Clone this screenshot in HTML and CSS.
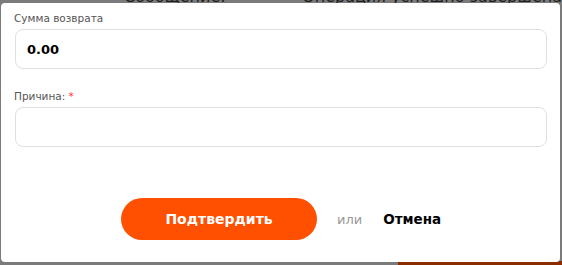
FILE: index.html
```html
<!DOCTYPE html>
<html lang="ru">
<head>
  <meta charset="UTF-8">
  <meta name="viewport" content="width=device-width, initial-scale=1.0">
  <title>Возврат</title>
  <link rel="stylesheet" href="styles.css">
</head>
<body>
  <div class="page">
    <div class="info-row">
      <span class="info-label">Сообщение:</span>
      <span class="info-value">Операция успешно завершена</span>
    </div>
    <div class="page-bottom">
      <div class="page-btn"></div>
    </div>
  </div>

  <div class="modal">
    <div class="field">
      <label for="amount">Сумма возврата</label>
      <input type="text" id="amount" class="amount" value="0.00">
    </div>
    <div class="field">
      <label for="reason">Причина: <span class="req">*</span></label>
      <input type="text" id="reason">
    </div>
    <div class="actions">
      <button class="btn">Подтвердить</button>
      <span class="or">или</span>
      <a href="#" class="cancel">Отмена</a>
    </div>
  </div>
</body>
</html>
```

FILE: styles.css
```css
body {
  margin: 0;
  width: 562px;
  height: 265px;
  overflow: hidden;
  background-color: #7b7b7b;
  font-family: "DejaVu Sans", Verdana, sans-serif;
  position: relative;
}
.page {
  height: 265px;
  display: flex;
  flex-direction: column;
  justify-content: space-between;
}
.info-row {
  display: flex;
  margin-top: -13px;
  font-size: 16px;
  line-height: 19px;
  color: #1e1e1e;
}
.info-label {
  margin-left: 124px;
  width: 263px;
}
.info-value {
  white-space: nowrap;
}
.page-bottom {
  display: flex;
  justify-content: flex-end;
  height: 4px;
}
.page-btn {
  width: 164px;
  background-color: #8a2c00;
}
.modal {
  position: absolute;
  left: 1px;
  top: 3px;
  width: 559px;
  height: 259px;
  box-sizing: border-box;
  background-color: white;
  border-radius: 4px;
  padding: 9px 14px 0 13px;
}
.field {
  margin-bottom: 21px;
}
.field label {
  display: block;
  font-size: 10.5px;
  color: #555;
  margin-bottom: 5px;
}
.req {
  color: #f33;
}
.field input {
  display: block;
  width: 532px;
  height: 40px;
  box-sizing: border-box;
  margin-left: 1px;
  border: 1px solid #e0e0e0;
  border-radius: 8px;
  padding: 0 11px;
  font-family: "DejaVu Sans", Verdana, sans-serif;
  font-size: 13px;
  outline: none;
}
.field input.amount {
  font-weight: bold;
  color: #000;
}
.actions {
  display: flex;
  align-items: center;
  margin-top: 51px;
  margin-left: 107px;
}
.btn {
  width: 196px;
  height: 42px;
  border: none;
  border-radius: 21px;
  background-color: #fe5000;
  color: white;
  font-family: "DejaVu Sans", Verdana, sans-serif;
  font-size: 14px;
  font-weight: bold;
  cursor: pointer;
}
.or {
  margin-left: 20px;
  font-size: 13px;
  color: #999;
}
.cancel {
  margin-left: 21px;
  font-size: 13.5px;
  font-weight: bold;
  color: #000;
  text-decoration: none;
}
```
